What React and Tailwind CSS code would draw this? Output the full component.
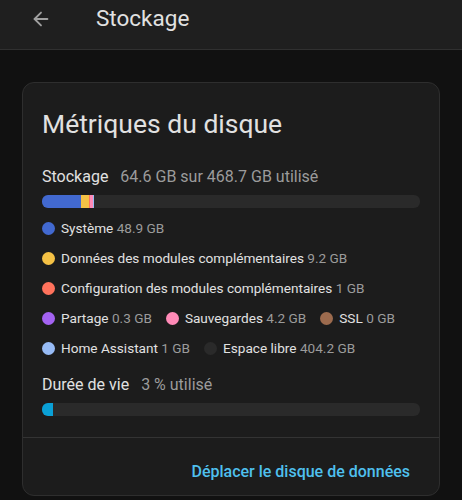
import React from 'react';
import { ArrowLeft } from 'lucide-react';

const segments = [
  { color: 'bg-[#4269d0]', pct: 10.43 },
  { color: 'bg-[#f4c145]', pct: 1.96 },
  { color: 'bg-[#ff725c]', pct: 0.21 },
  { color: 'bg-[#a463f2]', pct: 0.06 },
  { color: 'bg-[#ff8ab7]', pct: 0.9 },
  { color: 'bg-[#97bbf5]', pct: 0.21 },
];

const rows = [
  [{ dot: 'bg-[#4269d0]', label: 'Système', value: '48.9 GB' }],
  [{ dot: 'bg-[#f4c145]', label: 'Données des modules complémentaires', value: '9.2 GB' }],
  [{ dot: 'bg-[#ff725c]', label: 'Configuration des modules complémentaires', value: '1 GB' }],
  [
    { dot: 'bg-[#a463f2]', label: 'Partage', value: '0.3 GB' },
    { dot: 'bg-[#ff8ab7]', label: 'Sauvegardes', value: '4.2 GB' },
    { dot: 'bg-[#9c6b4e]', label: 'SSL', value: '0 GB' },
  ],
  [
    { dot: 'bg-[#97bbf5]', label: 'Home Assistant', value: '1 GB' },
    { dot: 'bg-[#2a2a2a]', label: 'Espace libre', value: '404.2 GB' },
  ],
];

function LegendItem({ dot, label, value }) {
  return (
    <span className="flex items-center gap-[6px]">
      <span className={`w-[13px] h-[13px] rounded-full ${dot}`} />
      <span className="text-[#e1e1e1]">
        {label} <span className="text-[#9b9b9b]">{value}</span>
      </span>
    </span>
  );
}

export default function App() {
  return (
    <div className="min-h-[500px] bg-[#111111] font-['Roboto',sans-serif] overflow-hidden">
      {/* Top bar */}
      <div className="h-[50px] bg-[#1f1f1f] border-b border-[#303030] flex items-start pt-[6px]">
        <div className="w-[96px] pl-[30px] pt-[2px]">
          <ArrowLeft className="w-[22px] h-[22px] text-[#a0a0a0]" strokeWidth={2} />
        </div>
        <h1 className="text-[22.5px] leading-[24px] text-[#e1e1e1]">Stockage</h1>
      </div>

      {/* Content */}
      <div className="pt-[32px] px-[22px]">
        <div className="h-[414px] rounded-[12px] border border-[#2e2e2e] bg-[#1c1c1c] flex flex-col">
          <div className="pt-[25px] px-[19px] pb-[21px]">
            <h2 className="text-[26.5px] leading-[32px] text-[#e1e1e1]">Métriques du disque</h2>

            <div className="mt-[25px] text-[16px] leading-[24px]">
              <span className="text-[#e1e1e1]">Stockage</span>
              <span className="ml-[12px] text-[#9b9b9b]">64.6 GB sur 468.7 GB utilisé</span>
            </div>
            <div className="mt-[6px] h-[13px] rounded-[6px] bg-[#2a2a2a] overflow-hidden flex">
              {segments.map((s, i) => (
                <div key={i} className={`h-full ${s.color}`} style={{ width: `${s.pct}%` }} />
              ))}
            </div>

            <div className="mt-[10px] flex flex-col gap-[10px] text-[13.6px] leading-[20px]">
              {rows.map((row, i) => (
                <div key={i} className="flex gap-[14px]">
                  {row.map(item => (
                    <LegendItem key={item.label} {...item} />
                  ))}
                </div>
              ))}
            </div>

            <div className="mt-[15px] text-[16px] leading-[24px]">
              <span className="text-[#e1e1e1]">Durée de vie</span>
              <span className="ml-[12px] text-[#9b9b9b]">3 % utilisé</span>
            </div>
            <div className="mt-[6px] h-[13px] rounded-[6px] bg-[#2a2a2a] overflow-hidden">
              <div className="h-full w-[3%] bg-[#0aa0d6]" />
            </div>
          </div>

          <div className="border-t border-[#333333] flex justify-end pt-[22px] pr-[29px]">
            <button className="text-[16px] leading-[24px] font-medium text-[#4fc0ee]">
              Déplacer le disque de données
            </button>
          </div>
        </div>
      </div>
    </div>
  );
}
